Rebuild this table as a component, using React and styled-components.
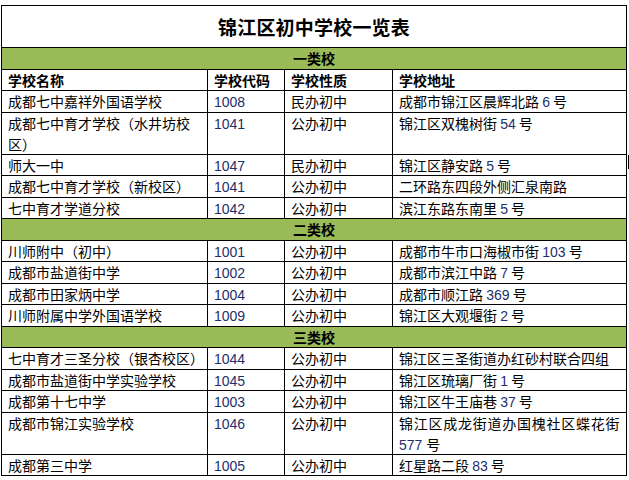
import React from "react";
import styled, { createGlobalStyle } from "styled-components";

const GlobalStyle = createGlobalStyle`
  html, body {
    margin: 0;
    padding: 0;
    background: #ffffff;
  }
  body {
    font-family: "Noto Sans CJK SC", "Liberation Sans", sans-serif;
    color: #000000;
  }
`;

const SECTIONS = [
  {
    label: "一类校",
    header: true,
    rows: [
      { name: "成都七中嘉祥外国语学校", code: "1008", kind: "民办初中", addr: "成都市锦江区晨辉北路 6 号" },
      { name: "成都七中育才学校（水井坊校区）", code: "1041", kind: "公办初中", addr: "锦江区双槐树街 54 号", tall: true },
      { name: "师大一中", code: "1047", kind: "民办初中", addr: "锦江区静安路 5 号", mark: true },
      { name: "成都七中育才学校（新校区）", code: "1041", kind: "公办初中", addr: "二环路东四段外侧汇泉南路" },
      { name: "七中育才学道分校", code: "1042", kind: "公办初中", addr: "滨江东路东南里 5 号" },
    ],
  },
  {
    label: "二类校",
    rows: [
      { name: "川师附中（初中）", code: "1001", kind: "公办初中", addr: "成都市牛市口海椒市街 103 号" },
      { name: "成都市盐道街中学", code: "1002", kind: "公办初中", addr: "成都市滨江中路 7 号" },
      { name: "成都市田家炳中学", code: "1004", kind: "公办初中", addr: "成都市顺江路 369 号" },
      { name: "川师附属中学外国语学校", code: "1009", kind: "公办初中", addr: "锦江区大观堰街 2 号" },
    ],
  },
  {
    label: "三类校",
    rows: [
      { name: "七中育才三圣分校（银杏校区）", code: "1044", kind: "公办初中", addr: "锦江区三圣街道办红砂村联合四组" },
      { name: "成都市盐道街中学实验学校", code: "1045", kind: "公办初中", addr: "锦江区琉璃厂街 1 号" },
      { name: "成都第十七中学", code: "1003", kind: "公办初中", addr: "锦江区牛王庙巷 37 号" },
      { name: "成都市锦江实验学校", code: "1046", kind: "公办初中", addr: "锦江区成龙街道办国槐社区蝶花街 577 号", tall: true, spread: true },
      { name: "成都第三中学", code: "1005", kind: "公办初中", addr: "红星路二段 83 号" },
    ],
  },
];

const Sheet = styled.div`
  margin: 5px 0 0 1px;
  width: 626px;
  border-left: 1px solid #000;
  border-top: 1px solid #000;
  box-sizing: border-box;
`;

const TitleRow = styled.div`
  height: 42px;
  border-right: 1px solid #000;
  border-bottom: 1px solid #000;
  box-sizing: border-box;
  display: flex;
  align-items: center;
  justify-content: center;
  font-size: 19px;
  font-weight: 700;
  letter-spacing: 0.2px;
`;

const Band = styled.div`
  height: 21.5px;
  background: #9bbb59;
  border-right: 1px solid #000;
  border-bottom: 1px solid #000;
  box-sizing: border-box;
  display: flex;
  align-items: center;
  justify-content: center;
  font-size: 14px;
  font-weight: 700;
`;

const Row = styled.div`
  position: relative;
  display: grid;
  grid-template-columns: 206px 77px 108px 234px;
  height: ${(p) => (p.$tall ? "42px" : "21.5px")};

  ${(p) =>
    p.$mark &&
    `
    &::after {
      content: "";
      position: absolute;
      right: -3px;
      top: 0;
      width: 2px;
      height: 14px;
      background: #000;
    }
  `}
`;

const Cell = styled.div`
  border-right: 1px solid #000;
  border-bottom: 1px solid #000;
  box-sizing: border-box;
  padding: 0 ${(p) => (p.$spread ? "0" : "4px")} 0 6px;
  font-size: 14px;
  line-height: 21px;
  font-weight: ${(p) => (p.$bold ? 700 : 400)};
  letter-spacing: ${(p) => (p.$spread ? "0.75px" : "0")};
  overflow: hidden;
`;

const Num = styled.span`
  font-family: "Liberation Sans", "Noto Sans", sans-serif;
  font-size: 14px;
  color: #1d2f6c;
  letter-spacing: 0;
`;

const withNumbers = (text) =>
  text.split(/(\d+)/).map((part, i) =>
    /^\d+$/.test(part) ? <Num key={i}>{part}</Num> : part
  );

export default function App() {
  return (
    <>
      <GlobalStyle />
      <Sheet>
        <TitleRow>锦江区初中学校一览表</TitleRow>
        {SECTIONS.map((section) => (
          <React.Fragment key={section.label}>
            <Band>{section.label}</Band>
            {section.header && (
              <Row>
                <Cell $bold>学校名称</Cell>
                <Cell $bold>学校代码</Cell>
                <Cell $bold>学校性质</Cell>
                <Cell $bold>学校地址</Cell>
              </Row>
            )}
            {section.rows.map((row) => (
              <Row key={row.name} $tall={row.tall} $mark={row.mark}>
                <Cell>{row.name}</Cell>
                <Cell>
                  <Num>{row.code}</Num>
                </Cell>
                <Cell>{row.kind}</Cell>
                <Cell $spread={row.spread}>{withNumbers(row.addr)}</Cell>
              </Row>
            ))}
          </React.Fragment>
        ))}
      </Sheet>
    </>
  );
}
